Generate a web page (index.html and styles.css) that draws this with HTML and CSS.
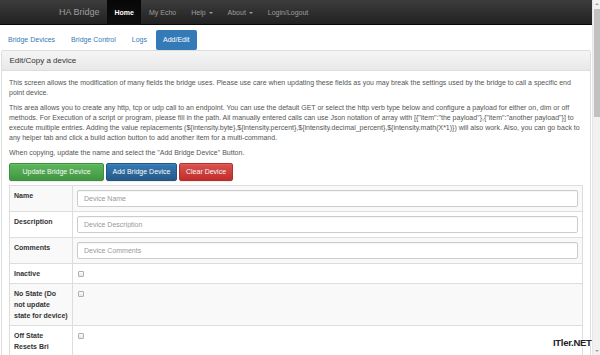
FILE: index.html
```html
<!DOCTYPE html>
<html lang="en">
<head>
    <meta charset="UTF-8">
    <title>HA Bridge</title>
    <link rel="stylesheet" href="styles.css">
</head>
<body>
    <div class="page">
        <nav class="navbar">
            <span class="brand">HA Bridge</span>
            <ul class="nav-links">
                <li class="active"><a>Home</a></li>
                <li><a>My Echo</a></li>
                <li><a>Help <span class="caret"></span></a></li>
                <li><a>About <span class="caret"></span></a></li>
                <li><a>Login/Logout</a></li>
            </ul>
        </nav>

        <ul class="pills">
            <li><a>Bridge Devices</a></li>
            <li><a>Bridge Control</a></li>
            <li><a>Logs</a></li>
            <li class="active"><a>Add/Edit</a></li>
        </ul>

        <div class="panel">
            <div class="panel-heading"><h3>Edit/Copy a device</h3></div>
            <div class="panel-body">
                <p>This screen allows the modification of many fields the bridge uses. Please use care when updating these fields as you may break the settings used by the bridge to call a specific end point device.</p>
                <p>This area allows you to create any http, tcp or udp call to an endpoint. You can use the default GET or select the http verb type below and configure a payload for either on, dim or off methods. For Execution of a script or program, please fill in the path. All manually entered calls can use Json notation of array with [{"item":"the payload"},{"item":"another payload"}] to execute multiple entries. Adding the value replacements (${intensity.byte},${intensity.percent},${intensity.decimal_percent},${intensity.math(X*1)}) will also work. Also, you can go back to any helper tab and click a build action button to add another item for a multi-command.</p>
                <p>When copying, update the name and select the "Add Bridge Device" Button.</p>
                <div class="btns">
                    <button class="btn btn-success btn-wide">Update Bridge Device</button>
                    <button class="btn btn-primary">Add Bridge Device</button>
                    <button class="btn btn-danger">Clear Device</button>
                </div>
                <table class="device-table">
                    <tr>
                        <th>Name</th>
                        <td><input type="text" placeholder="Device Name"></td>
                    </tr>
                    <tr>
                        <th>Description</th>
                        <td><input type="text" placeholder="Device Description"></td>
                    </tr>
                    <tr>
                        <th>Comments</th>
                        <td><input type="text" placeholder="Device Comments"></td>
                    </tr>
                    <tr>
                        <th>Inactive</th>
                        <td><input type="checkbox"></td>
                    </tr>
                    <tr>
                        <th>No State (Do not update state for device)</th>
                        <td><input type="checkbox"></td>
                    </tr>
                    <tr>
                        <th>Off State Resets Bri</th>
                        <td><input type="checkbox"></td>
                    </tr>
                </table>
            </div>
        </div>

        <span class="watermark">ITler.NET</span>
    </div>

    <div class="scrollbar">
        <span class="arrow up"></span>
        <div class="thumb"></div>
        <span class="arrow down"></span>
    </div>
</body>
</html>
```

FILE: styles.css
```css
html, body { margin: 0; padding: 0; height: 355px; overflow: hidden; }
body { display: flex; font-family: "Liberation Sans", Arial, sans-serif; font-size: 7px; line-height: 10px; color: #333; background: #fff; }
ul { list-style: none; margin: 0; padding: 0; }
a { text-decoration: none; cursor: pointer; }

.page { position: relative; flex: 1; height: 355px; overflow: hidden; }

/* top navbar */
.navbar { display: flex; height: 25px; padding-left: 51.5px; background: linear-gradient(to bottom, #3c3c3c, #222); border-bottom: 0.5px solid #080808; box-sizing: border-box; }
.brand { padding: 0 7.5px; font-size: 9px; line-height: 25px; color: #9d9d9d; }
.nav-links { display: flex; }
.nav-links a { display: block; padding: 0 7.5px; line-height: 25px; color: #9d9d9d; }
.nav-links .active a { color: #fff; font-weight: bold; background: linear-gradient(to bottom, #080808, #0f0f0f); box-shadow: inset 0 1.5px 4px rgba(0, 0, 0, 0.25); }
.caret { display: inline-block; width: 0; height: 0; margin-left: 1px; vertical-align: middle; border-top: 2px solid; border-left: 2px solid transparent; border-right: 2px solid transparent; }

/* pills */
.pills { display: flex; padding: 5px 0 0 0.5px; }
.pills li + li { margin-left: 1px; }
.pills a { display: block; padding: 5px 7.5px; line-height: 10px; color: #337ab7; border-radius: 2px; }
.pills .active a { color: #fff; background: #337ab7; }

/* panel */
.panel { margin: 0 1px; border: 0.5px solid #ddd; border-radius: 2px; background: #fff; }
.panel-heading { padding: 5px 7.5px; background: linear-gradient(to bottom, #f5f5f5, #e8e8e8); border-bottom: 0.5px solid #ddd; }
.panel-heading h3 { margin: 0; font-size: 8px; font-weight: normal; line-height: 9px; color: #333; }
.panel-body { padding: 6.5px 7px 0; }
.panel-body p { margin: 0 0 5px; color: #555; }

/* buttons */
.btns { display: flex; gap: 1.5px; }
.btn { padding: 3px 6px; font-family: inherit; font-size: 7px; line-height: 10px; color: #fff; border: 0.5px solid transparent; border-radius: 2px; text-shadow: 0 -0.5px 0 rgba(0, 0, 0, 0.2); box-shadow: inset 0 0.5px 0 rgba(255, 255, 255, 0.15), 0 0.5px 1px rgba(0, 0, 0, 0.075); }
.btn-wide { width: 95px; }
.btn-success { background: linear-gradient(to bottom, #5cb85c, #419641); border-color: #3e8f3e; }
.btn-primary { background: linear-gradient(to bottom, #337ab7, #265a88); border-color: #245580; }
.btn-danger { background: linear-gradient(to bottom, #d9534f, #c12e2a); border-color: #b92c28; }

/* device table */
.device-table { width: 100%; margin-top: 4px; border-collapse: collapse; border: 0.5px solid #ddd; }
.device-table th, .device-table td { padding: 4px; border: 0.5px solid #ddd; vertical-align: top; text-align: left; line-height: 11px; }
.device-table th { width: 54px; font-weight: bold; color: #333; }
.device-table tr:nth-child(odd) { background: #f9f9f9; }
.device-table input[type="text"] { display: block; width: 100%; height: 17px; box-sizing: border-box; padding: 3px 6px; font-family: inherit; font-size: 7px; color: #555; background: #fff; border: 0.5px solid #ccc; border-radius: 2px; box-shadow: inset 0 0.5px 0.5px rgba(0, 0, 0, 0.075); }
.device-table input::placeholder { color: #999; }
.device-table input[type="checkbox"] { appearance: none; display: block; width: 6px; height: 6px; margin: 3px 0 0 0.5px; border: 0.5px solid #b0b0b0; border-radius: 1px; background: linear-gradient(to bottom, #fcfcfc, #e6e6e6); }

.watermark { position: absolute; right: 0; bottom: 7px; font-size: 9.5px; font-weight: bold; letter-spacing: -0.3px; color: #222; text-shadow: 0 0 2px #fff, 0 0 2px #fff; }

/* fake scrollbar */
.scrollbar { position: relative; width: 8.5px; height: 355px; background: #f1f1f1; border-left: 0.5px solid #e6e6e6; box-sizing: border-box; }
.thumb { position: absolute; top: 9px; left: 1.5px; width: 5.5px; height: 108px; background: #c1c1c1; }
.arrow { position: absolute; left: 2px; width: 0; height: 0; border-left: 2px solid transparent; border-right: 2px solid transparent; }
.arrow.up { top: 3px; border-bottom: 2.5px solid #a3a3a3; }
.arrow.down { bottom: 3px; border-top: 2.5px solid #a3a3a3; }
```
